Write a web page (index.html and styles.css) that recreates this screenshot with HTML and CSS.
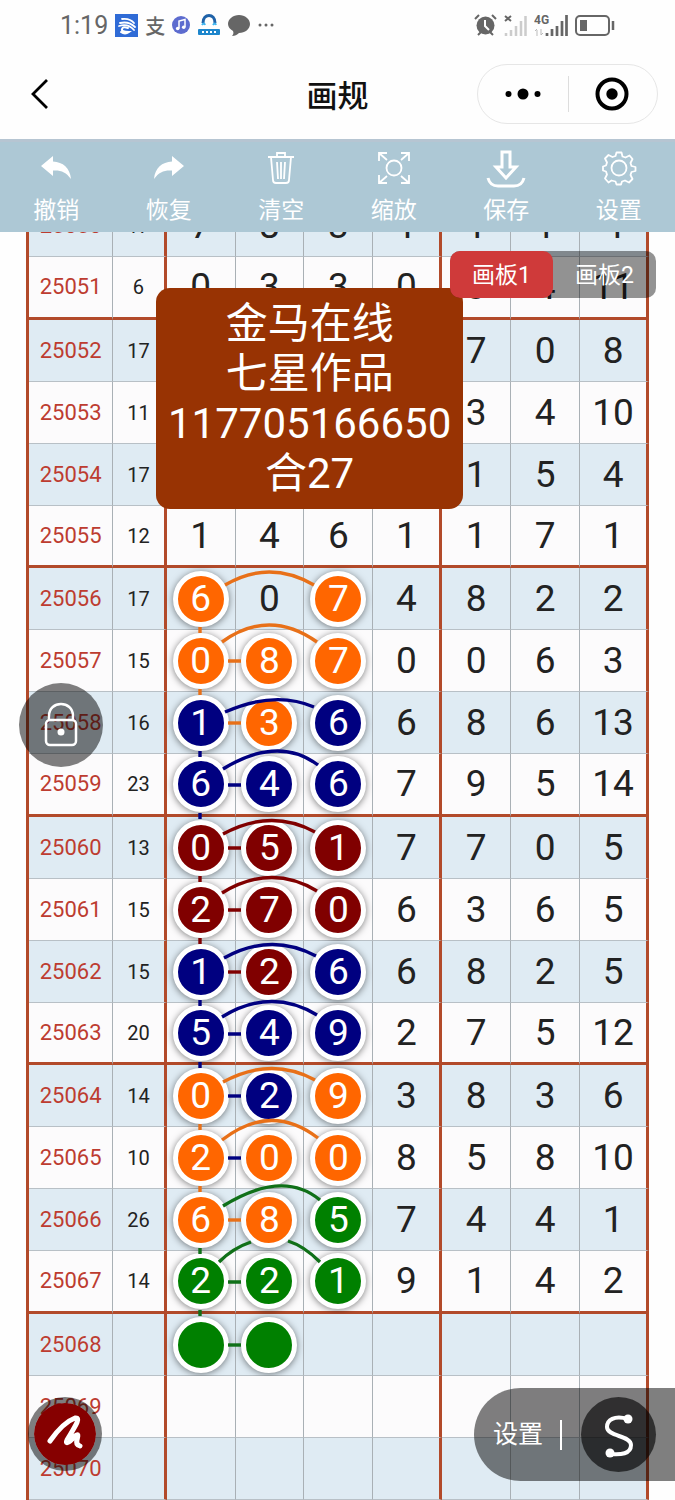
FILE: index.html
```
<!DOCTYPE html>
<html lang="zh-CN">
<head>
    <meta charset="UTF-8">
    <meta name="viewport" content="width=device-width, initial-scale=1.0">
    <title>画规</title>
    <link rel="stylesheet" href="styles.css">
</head>
<body>
    <header class="header">
        <div class="status">
            <div class="status-group">
                <span class="time">1:19</span>
                <svg width="23" height="23" viewBox="0 0 23 23"><rect width="23" height="23" fill="#2f6bd6"/><g fill="none" stroke="#fff" stroke-width="1.8" stroke-linecap="round"><path d="M7 5Q15 4 19 9M5 9Q14 7 20 13M4 12Q13 9 19 16"/><path d="M13 14Q8 12 7 15T14 18Q10 21 6 18" stroke-width="2"/></g></svg>
                <span class="pay">支</span>
                <svg width="18" height="18" viewBox="0 0 18 18"><circle cx="9" cy="9" r="9" fill="#5d6ccf"/><path d="M7 12.500V5l6-1.500v7.500" fill="none" stroke="#fff" stroke-width="1.500"/><circle cx="5.700" cy="12.500" r="1.800" fill="#fff"/><circle cx="11.700" cy="11.300" r="1.800" fill="#fff"/></svg>
                <svg width="24" height="22" viewBox="0 0 24 22"><path d="M6 9C6-1 18-1 18 9" fill="none" stroke="#1f62a8" stroke-width="3"/><path d="M5 11q2-3 3 0M16 11q2-3 3 0" fill="none" stroke="#3fb4ee" stroke-width="2"/><rect x="1" y="15" width="22" height="6" rx="1" fill="#1d86cc"/><path d="M5 18h14" stroke="#fff" stroke-width="2" stroke-dasharray="2 2"/></svg>
                <svg width="22" height="21" viewBox="0 0 22 21"><path d="M11 0c6 0 11 4 11 9s-5 9-11 9c-2 2-4 3-7 3 1-1 2-3 1-5C2 14 0 12 0 9c0-5 5-9 11-9z" fill="#666"/></svg>
                <svg width="18" height="6" viewBox="0 0 18 6" fill="#666"><circle cx="3" cy="3" r="1.500"/><circle cx="9" cy="3" r="1.500"/><circle cx="15" cy="3" r="1.500"/></svg>
            </div>
            <div class="status-group">
                <svg width="23" height="22" viewBox="0 0 23 22"><circle cx="11.500" cy="11.500" r="9" fill="#666"/><path d="M1 5l4-4M22 5l-4-4M4 21l3-3M19 21l-3-3" stroke="#666" stroke-width="2"/><path d="M11 6v6l4 4" fill="none" stroke="#fff" stroke-width="2"/></svg>
                <svg width="23" height="21" viewBox="0 0 23 21"><path d="M1 1l6 5M7 1L1 6" stroke="#666" stroke-width="2"/><path d="M2 21v-3M7 21v-6M12 21V11M17 21V6M21.500 21V1" stroke="#ccc" stroke-width="2.500"/></svg>
                <svg class="signal" width="34" height="22" viewBox="0 0 34 22"><text x="0" y="10">4G</text><path d="M3 22v-6M1 17l2-2M7 15v6M9 19l-2 2" stroke="#bbb" fill="none"/><path d="M13 22v-3M18 22v-7M23 22V12M28 22V7M32.500 22V1" stroke="#666" stroke-width="2.700"/></svg>
                <svg width="40" height="21" viewBox="0 0 40 21"><rect x="1" y="1" width="33" height="19" rx="4" fill="none" stroke="#666" stroke-width="2"/><rect x="5" y="5" width="7" height="11" fill="#666"/><path d="M38 6v9" stroke="#666" stroke-width="2.500"/></svg>
            </div>
        </div>
        <nav class="nav">
            <button class="back" aria-label="返回"><svg width="20" height="32" viewBox="0 0 20 32"><path d="M17 2L3 16l14 14" fill="none" stroke="#000" stroke-width="2.800"/></svg></button>
            <h1 class="title">画规</h1>
            <div class="capsule">
                <button aria-label="更多"><svg width="36" height="12" viewBox="0 0 36 12"><circle cx="3.500" cy="6" r="3"/><circle cx="18" cy="6" r="5.500"/><circle cx="32.500" cy="6" r="3"/></svg></button>
                <button aria-label="关闭"><svg width="34" height="34" viewBox="0 0 34 34"><circle cx="17" cy="17" r="14.500" fill="none" stroke="#000" stroke-width="4"/><circle cx="17" cy="17" r="5.700"/></svg></button>
            </div>
        </nav>
    </header>

    <div class="toolbar">
        <button><svg width="36" height="36" viewBox="0 0 36 36"><path d="M3 16L15 6v5.500C25 12 32 18 33 29 28 22 23 20 15 20.500V26z" fill="#fff"/></svg>撤销</button>
        <button><svg width="36" height="36" viewBox="0 0 36 36"><path d="M33 16L21 6v5.500C11 12 4 18 3 29 8 22 13 20 21 20.500V26z" fill="#fff"/></svg>恢复</button>
        <button><svg width="36" height="36" viewBox="0 0 36 36" class="line"><path d="M5 7h26M14 7V3h8v4M8 7l2 23q0 3 3 3h10q3 0 3-3l2-23M14 12l1 17M18 12v17M22 12l-1 17"/></svg>清空</button>
        <button><svg width="36" height="36" viewBox="0 0 36 36" class="line"><circle cx="18" cy="18" r="7.500"/><path d="M3 11V3h8M25 3h8v8M33 25v8h-8M11 33H3v-8M3 3l8 7M33 3l-8 7M33 33l-8-7M3 33l8-7"/></svg>缩放</button>
        <button><svg width="40" height="38" viewBox="0 0 40 38" class="line bold"><path d="M16 2h8v15h6L20 28 10 17h6zM2 28q2 8 10 8h16q8 0 10-8"/></svg>保存</button>
        <button><svg width="36" height="36" viewBox="0 0 36 36" class="line"><circle cx="18" cy="18" r="7.500"/><path d="M15.500 2.500h5l1 4 3 1 4-2 3 3.500-2 4 1 3 4 1v4l-4 1-1 3 2 4-3.500 3.500-4-2-3 1-1 3h-4.500l-1-3-4-1-3 2-3.500-4 2-4-1-3-3-1v-4l3-1 1-3-2-4 3.500-3.500 4 2 3-1z" stroke-linejoin="round"/></svg>设置</button>
    </div>

    <main class="board">
        <div class="sheet">
            <table class="grid">
                <colgroup><col class="c-issue"><col class="c-sum"><col span="7"></colgroup>
                <tbody>
                    <tr><th>25050</th><td>17</td><td>7</td><td>8</td><td>3</td><td>1</td><td>1</td><td>1</td><td>4</td></tr>
                    <tr><th>25051</th><td>6</td><td>0</td><td>3</td><td>3</td><td>0</td><td>3</td><td>4</td><td>11</td></tr>
                    <tr><th>25052</th><td>17</td><td></td><td></td><td></td><td></td><td>7</td><td>0</td><td>8</td></tr>
                    <tr><th>25053</th><td>11</td><td></td><td></td><td></td><td></td><td>3</td><td>4</td><td>10</td></tr>
                    <tr><th>25054</th><td>17</td><td></td><td></td><td></td><td></td><td>1</td><td>5</td><td>4</td></tr>
                    <tr><th>25055</th><td>12</td><td>1</td><td>4</td><td>6</td><td>1</td><td>1</td><td>7</td><td>1</td></tr>
                    <tr><th>25056</th><td>17</td><td><b class="orange">6</b></td><td>0</td><td><b class="orange">7</b></td><td>4</td><td>8</td><td>2</td><td>2</td></tr>
                    <tr><th>25057</th><td>15</td><td><b class="orange">0</b></td><td><b class="orange">8</b></td><td><b class="orange">7</b></td><td>0</td><td>0</td><td>6</td><td>3</td></tr>
                    <tr><th>25058</th><td>16</td><td><b class="navy">1</b></td><td><b class="orange">3</b></td><td><b class="navy">6</b></td><td>6</td><td>8</td><td>6</td><td>13</td></tr>
                    <tr><th>25059</th><td>23</td><td><b class="navy">6</b></td><td><b class="navy">4</b></td><td><b class="navy">6</b></td><td>7</td><td>9</td><td>5</td><td>14</td></tr>
                    <tr><th>25060</th><td>13</td><td><b class="maroon">0</b></td><td><b class="maroon">5</b></td><td><b class="maroon">1</b></td><td>7</td><td>7</td><td>0</td><td>5</td></tr>
                    <tr><th>25061</th><td>15</td><td><b class="maroon">2</b></td><td><b class="maroon">7</b></td><td><b class="maroon">0</b></td><td>6</td><td>3</td><td>6</td><td>5</td></tr>
                    <tr><th>25062</th><td>15</td><td><b class="navy">1</b></td><td><b class="maroon">2</b></td><td><b class="navy">6</b></td><td>6</td><td>8</td><td>2</td><td>5</td></tr>
                    <tr><th>25063</th><td>20</td><td><b class="navy">5</b></td><td><b class="navy">4</b></td><td><b class="navy">9</b></td><td>2</td><td>7</td><td>5</td><td>12</td></tr>
                    <tr><th>25064</th><td>14</td><td><b class="orange">0</b></td><td><b class="navy">2</b></td><td><b class="orange">9</b></td><td>3</td><td>8</td><td>3</td><td>6</td></tr>
                    <tr><th>25065</th><td>10</td><td><b class="orange">2</b></td><td><b class="orange">0</b></td><td><b class="orange">0</b></td><td>8</td><td>5</td><td>8</td><td>10</td></tr>
                    <tr><th>25066</th><td>26</td><td><b class="orange">6</b></td><td><b class="orange">8</b></td><td><b class="green">5</b></td><td>7</td><td>4</td><td>4</td><td>1</td></tr>
                    <tr><th>25067</th><td>14</td><td><b class="green">2</b></td><td><b class="green">2</b></td><td><b class="green">1</b></td><td>9</td><td>1</td><td>4</td><td>2</td></tr>
                    <tr><th>25068</th><td></td><td><b class="green"></b></td><td><b class="green"></b></td><td></td><td></td><td></td><td></td><td></td></tr>
                    <tr><th>25069</th><td></td><td></td><td></td><td></td><td></td><td></td><td></td><td></td></tr>
                    <tr><th>25070</th><td></td><td></td><td></td><td></td><td></td><td></td><td></td><td></td></tr>
                </tbody>
            </table>

            <!-- connecting lines, one group per row, y = 0 is the row's centre -->
            <svg class="links" viewBox="0 0 623 1305" preserveAspectRatio="none">
                <g transform="translate(0,404)" stroke="#e87018"><path d="M199-14Q243-40 288-14M174 28v6"/></g>
                <g transform="translate(0,466)" stroke="#e87018"><path d="M196-19Q243-53 291-19M174 28v6M202 0h13"/></g>
                <g transform="translate(0,528)"><path d="M202 0h13" stroke="#e87018"/><path d="M199-11Q249-33 288-16M174 28v6" stroke="#000080"/></g>
                <g transform="translate(0,590)" stroke="#000080"><path d="M197-16Q252-50 292-20M174 28v6M202 0h13"/></g>
                <g transform="translate(0,653)" stroke="#800000"><path d="M197-14Q245-40 289-16M174 28v6M202 0h13"/></g>
                <g transform="translate(0,715)" stroke="#800000"><path d="M196-17Q245-47 291-19M174 28v6M202 0h13"/></g>
                <g transform="translate(0,777)"><path d="M202 0h13" stroke="#800000"/><path d="M198-14Q245-40 290-16M174 28v6" stroke="#000080"/></g>
                <g transform="translate(0,839)" stroke="#000080"><path d="M196-17Q245-47 291-19M174 28v6M202 0h13"/></g>
                <g transform="translate(0,901)"><path d="M202 0h13" stroke="#000080"/><path d="M197-14Q245-40 289-16M174 28v6" stroke="#e87018"/></g>
                <g transform="translate(0,963)"><path d="M202 0h13" stroke="#000080"/><path d="M196-18Q245-56 292-20M174 28v6" stroke="#e87018"/></g>
                <g transform="translate(0,1025)"><path d="M202 0h13" stroke="#e87018"/><path d="M197-14Q257-51 294-20M174 28v6" stroke="#107018"/></g>
                <g transform="translate(0,1087)" stroke="#107018"><path d="M193-20Q207-34 225-40M262-41Q278-36 294-20M174 28v6M202 0h13"/></g>
                <g transform="translate(0,1150)" stroke="#107018"><path d="M202 0h13"/></g>
            </svg>
        </div>

        <div class="note">金马在线<br>七星作品<br>117705166650<br>合27</div>

        <div class="tabs">
            <button class="active">画板1</button>
            <button>画板2</button>
        </div>

        <button class="lock" aria-label="锁定"><svg width="34" height="46" viewBox="0 0 34 46"><rect x="2" y="18" width="30" height="25" rx="4" fill="none" stroke="#fff" stroke-width="2.500"/><path d="M5 18v-4C5-2 29-2 29 14v4" fill="none" stroke="#fff" stroke-width="2.500"/><circle cx="17" cy="30" r="3.500" fill="#fff"/></svg></button>

        <button class="brush" aria-label="画笔"><svg width="40" height="40" viewBox="0 0 40 40"><path d="M5 27C12 17 22 7 30 4 37 3 29 14 22 26c-2 4 1 4 8-4 4-3 3 0 2 4-1 3 0 5 3 6" fill="none" stroke="#fff" stroke-width="5" stroke-linecap="round" stroke-linejoin="round"/></svg></button>

        <div class="panel">
            <button class="panel-set">设置</button>
            <button class="curve" aria-label="曲线"><svg width="34" height="48" viewBox="0 0 34 48"><path d="M26 8C12 4 5 9 5 16c0 10 24 8 24 18 0 9-10 10-21 9" fill="none" stroke="#fff" stroke-width="4"/><circle cx="26" cy="8" r="4.500" fill="#fff"/><circle cx="8" cy="42" r="4.500" fill="#fff"/></svg></button>
        </div>
    </main>
</body>
</html>
```
FILE: styles.css
```
* {
    box-sizing: border-box;
}

body {
    font-family: Roboto, "Noto Sans CJK SC", sans-serif;
    display: flex;
    flex-direction: column;
    height: 100vh;
    margin: 0;
    background: #fefefe;
    color: #222;
    overflow: hidden;
}

button {
    font: inherit;
    color: inherit;
    background: none;
    border: none;
    padding: 0;
    cursor: pointer;
}

svg {
    display: block;
    flex: none;
}

/* Status bar and title */
.status {
    display: flex;
    justify-content: space-between;
    height: 50px;
    padding: 0 60px;
}

.status-group {
    display: flex;
    align-items: center;
    gap: 7px;
    color: #666;
}

.time {
    font-size: 25px;
}

.pay {
    font-size: 20px;
    font-weight: 500;
}

.signal text {
    font-size: 12px;
    font-weight: bold;
    fill: #666;
}

.nav {
    display: grid;
    grid-template-columns: 1fr auto 1fr;
    align-items: center;
    height: 89px;
    padding: 0 17px 2px;
}

.back {
    justify-self: start;
    padding: 0 13px;
}

.title {
    margin: 0;
    font-size: 31px;
    font-weight: 500;
    color: #111;
}

.capsule {
    justify-self: end;
    display: flex;
    width: 181px;
    height: 60px;
    border: 1px solid #e6e6e6;
    border-radius: 30px;
}

.capsule button {
    position: relative;
    flex: 1;
    display: flex;
    align-items: center;
    justify-content: center;
}

.capsule button + button::before {
    content: "";
    position: absolute;
    left: 0;
    height: 36px;
    border-left: 1px solid #ddd;
}

/* Toolbar */
.toolbar {
    position: relative;
    z-index: 2;
    display: flex;
    height: 93px;
    background: #adc8d5;
    border-top: 3px solid #b6c5d2;
}

.toolbar button {
    flex: 1;
    display: flex;
    flex-direction: column;
    align-items: center;
    justify-content: space-between;
    padding: 8px 0 4px;
    font-size: 23px;
    line-height: 34px;
    color: #fff;
}

.line {
    fill: none;
    stroke: #fff;
    stroke-width: 1.8;
}

.bold {
    stroke-width: 3;
}

/* Number grid */
.board {
    position: relative;
    flex: 1;
    min-height: 0;
    overflow: hidden;
}

.sheet {
    position: relative;
    margin: -37px 26px 0;
}

.grid {
    width: 100%;
    table-layout: fixed;
    border-collapse: separate;
    border-spacing: 0;
    border-left: 3px solid #b24a2a;
}

.c-issue {
    width: 13.6%;
}

.c-sum {
    width: 8.6%;
}

.grid th,
.grid td {
    height: 62px;
    padding: 0;
    text-align: center;
    vertical-align: middle;
    border-right: 1px solid #a9b0b5;
    border-bottom: 1px solid #b8c0c6;
    background: #fcfbfc;
    font-size: 37px;
    line-height: 44px;
}

.grid th {
    font-size: 22px;
    font-weight: normal;
    color: #bd3c30;
}

.grid td:nth-child(2) {
    font-size: 20px;
}

.grid tr:nth-child(odd) > * {
    background: #dfebf3;
}

.grid tr > :nth-child(2),
.grid tr > :nth-child(6),
.grid tr > :nth-child(9) {
    border-right: 3px solid #b24a2a;
}

.grid tr:nth-child(4n + 2) > * {
    border-bottom: 3px solid #b24a2a;
}

.grid tr:nth-child(8n + 2) > * {
    height: 63px;
}

.grid b {
    display: block;
    width: 56px;
    height: 56px;
    margin: 0 auto;
    border: 5px solid #fff;
    border-radius: 50%;
    box-shadow: 0 1px 7px rgba(0, 0, 0, 0.5);
    color: #fff;
    font-size: 37px;
    font-weight: normal;
    line-height: 46px;
}

.orange {
    background: #ff6600;
}

.navy {
    background: #000080;
}

.maroon {
    background: #800000;
}

.green {
    background: #008000;
}

.links {
    position: absolute;
    top: 0;
    left: 0;
    width: 100%;
    height: 100%;
    fill: none;
    stroke-width: 3.4;
    pointer-events: none;
}

/* Floating items */
.note {
    position: absolute;
    top: 56px;
    left: 156px;
    padding: 11px 12px 10px;
    border-radius: 14px;
    background: #983303;
    color: #fff;
    font-size: 42px;
    line-height: 50px;
    text-align: center;
}

.tabs {
    position: absolute;
    top: 19px;
    right: 19px;
    display: flex;
    border-radius: 10px;
    background: rgba(0, 0, 0, 0.42);
    color: #fff;
    font-size: 23px;
}

.tabs button {
    width: 103px;
    height: 47px;
    padding-bottom: 3px;
    border-radius: 10px;
}

.tabs .active {
    background: #cf3a3a;
}

.lock,
.brush,
.curve {
    display: flex;
    align-items: center;
    justify-content: center;
    border-radius: 50%;
}

.lock {
    position: absolute;
    top: 451px;
    left: 19px;
    width: 84px;
    height: 84px;
    background: rgba(0, 0, 0, 0.5);
}

.brush {
    position: absolute;
    bottom: 29px;
    left: 28px;
    width: 74px;
    height: 74px;
    border: 6px solid rgba(0, 0, 0, 0.5);
    background: #860000;
    background-clip: padding-box;
}

.panel {
    position: absolute;
    right: 0;
    bottom: 19px;
    display: flex;
    align-items: center;
    gap: 19px;
    padding: 9px 19px;
    border-radius: 47px 0 0 47px;
    background: rgba(0, 0, 0, 0.5);
    color: #fff;
    font-size: 25px;
}

.panel-set {
    padding-right: 17px;
    border-right: 2px solid #fff;
    line-height: 30px;
}

.curve {
    width: 75px;
    height: 75px;
    background: rgba(0, 0, 0, 0.62);
}
```
